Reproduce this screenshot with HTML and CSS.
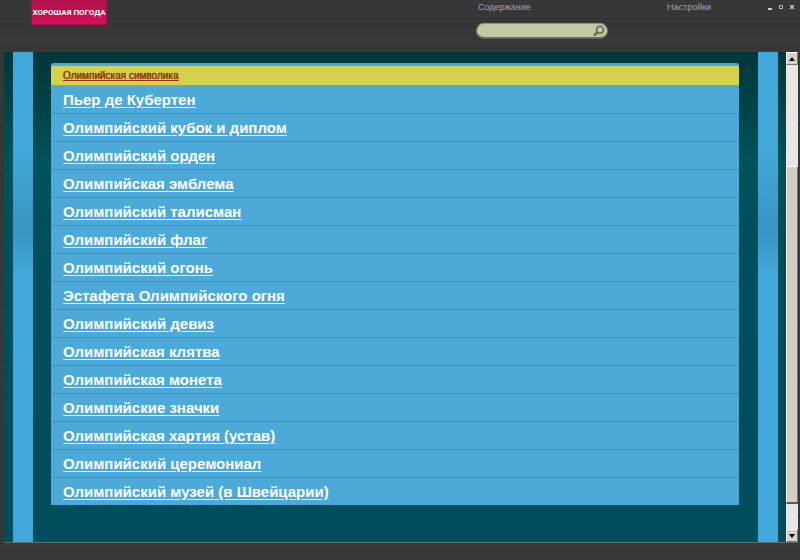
FILE: index.html
```html
<!DOCTYPE html>
<html lang="ru">
<head>
  <meta charset="UTF-8">
  <meta name="viewport" content="width=device-width, initial-scale=1.0">
  <title>Олимпийская символика</title>
  <link rel="stylesheet" href="styles.css">
</head>
<body>
  <header class="top">
    <a class="logo" href="#">ХОРОШАЯ ПОГОДА</a>
    <div class="tools">
      <a class="menu-link" href="#">Содержание</a>
      <form class="search">
        <input type="text" aria-label="Поиск">
        <button type="submit" aria-label="Найти">
          <svg width="12" height="12" viewBox="0 0 12 12" fill="none" stroke="#606253">
            <circle cx="7" cy="4.7" r="3.5" stroke-width="1.6"/>
            <path d="M4.5 7.2L1 10.6" stroke-width="2.2"/>
          </svg>
        </button>
      </form>
    </div>
    <a class="menu-link settings" href="#">Настройки</a>
    <div class="window-buttons">
      <button type="button" aria-label="Свернуть"><svg width="6" height="6" viewBox="0 0 6 6"><path d="M1 5h4" stroke="#ccc" stroke-width="2"/></svg></button>
      <button type="button" aria-label="Развернуть"><svg width="6" height="6" viewBox="0 0 6 6"><path d="M1.5 1.5h3v3h-3z" fill="none" stroke="#bbb"/></svg></button>
      <button type="button" aria-label="Закрыть"><svg width="6" height="6" viewBox="0 0 6 6"><path d="M1 1l4 4M5 1L1 5" stroke="#ccc" stroke-width="1.2"/></svg></button>
    </div>
  </header>

  <main class="stage">
    <div class="stripe"></div>
    <nav class="panel">
      <h1><a href="#">Олимпийская символика</a></h1>
      <ul>
        <li><a href="#">Пьер де Кубертен</a></li>
        <li><a href="#">Олимпийский кубок и диплом</a></li>
        <li><a href="#">Олимпийский орден</a></li>
        <li><a href="#">Олимпийская эмблема</a></li>
        <li><a href="#">Олимпийский талисман</a></li>
        <li><a href="#">Олимпийский флаг</a></li>
        <li><a href="#">Олимпийский огонь</a></li>
        <li><a href="#">Эстафета Олимпийского огня</a></li>
        <li><a href="#">Олимпийский девиз</a></li>
        <li><a href="#">Олимпийская клятва</a></li>
        <li><a href="#">Олимпийская монета</a></li>
        <li><a href="#">Олимпийские значки</a></li>
        <li><a href="#">Олимпийская хартия (устав)</a></li>
        <li><a href="#">Олимпийский церемониал</a></li>
        <li><a href="#">Олимпийский музей (в Швейцарии)</a></li>
      </ul>
    </nav>
    <div class="stripe"></div>
    <div class="scrollbar">
      <button type="button" aria-label="Вверх"><svg width="6" height="4" viewBox="0 0 6 4"><path d="M3 0l3 4H0z"/></svg></button>
      <div class="track"><div class="thumb"></div></div>
      <button type="button" aria-label="Вниз"><svg width="6" height="4" viewBox="0 0 6 4"><path d="M0 0h6L3 4z"/></svg></button>
    </div>
  </main>
</body>
</html>
```
FILE: styles.css
```css
* {
  box-sizing: border-box;
}

body {
  display: flex;
  flex-direction: column;
  min-height: 100vh;
  margin: 0;
  padding: 0 2px 17px 4px;
  font-family: "Liberation Sans", Arial, sans-serif;
  background: #383737 repeating-linear-gradient(#363535 0, #3b3a3a 2px, #383737 4px, #353434 5px, #3a3939 7px);
}

button {
  display: flex;
  align-items: center;
  justify-content: center;
  padding: 0;
  border: 0;
  background: none;
}

/* header */
.top {
  display: flex;
  align-items: flex-start;
  height: 52px;
}

.logo {
  width: 76px;
  height: 25px;
  margin-left: 27px;
  border: 1px solid #a70f46;
  border-top: 0;
  background: linear-gradient(#b01049, #d50f5a);
  color: #fff;
  font: bold 8px/25px Roboto, sans-serif;
  text-align: center;
  text-decoration: none;
  white-space: nowrap;
}

.tools {
  margin-left: auto;
}

.menu-link {
  display: block;
  padding-left: 2px;
  color: #a3a2a2;
  font-size: 9px;
  line-height: 15px;
  text-decoration: none;
}

.search {
  display: flex;
  align-items: center;
  width: 132px;
  height: 16px;
  margin-top: 8px;
  padding: 0 2px 0 8px;
  border: 1px solid #77796a;
  border-top-color: #929481;
  border-bottom: 2px solid #696b5e;
  border-radius: 8px;
  background: #c5c7a7;
}

.search input {
  flex: 1;
  min-width: 0;
  height: 12px;
  padding: 0;
  border: 0;
  outline: 0;
  background: none;
  font-size: 9px;
}

.settings {
  width: 102px;
  margin-left: 57px;
}

.window-buttons {
  display: flex;
  gap: 5px;
  padding: 4px 3px 0 0;
}

.window-buttons button {
  width: 6px;
  height: 6px;
}

/* content */
.stage {
  display: flex;
  flex: 1;
  border-bottom: 1px solid #55777c;
  background: linear-gradient(#00373b, #004347 50px, #00535a 110px, #00505c 180px, #004d5c);
}

.stripe {
  flex: none;
  width: 20px;
  margin-left: 9px;
  background: linear-gradient(#42a8d9 100px, #3897c5 170px, #3897c5 185px, #42a8d9 220px);
}

.panel {
  flex: 1;
  align-self: flex-start;
  margin: 11px 10px 37px 18px;
  border-top: 3px solid #4cacd9;
  border-radius: 3px 3px 0 0;
  background: #4da9d7;
}

.panel h1 {
  margin: 0;
  padding-left: 12px;
  border-bottom: 1px solid #8ca66b;
  background: #d6d04d;
  font-size: 10px;
  font-weight: normal;
  line-height: 19px;
}

.panel h1 a {
  color: #8a2c08;
  text-shadow: 0 0 1px #933b10;
}

.panel ul {
  margin: 0;
  padding: 0;
  list-style: none;
}

.panel li {
  height: 28px;
  padding-left: 12px;
  border-bottom: 1px solid #3f93bd;
  font-size: 15px;
  font-weight: bold;
  line-height: 28px;
}

.panel li:last-child {
  height: 27px;
  border-bottom: 0;
}

.panel li a {
  color: #fff;
  text-underline-offset: 2px;
}

/* scrollbar */
.scrollbar {
  display: flex;
  flex-direction: column;
  flex: none;
  width: 12px;
  margin-left: 8px;
  background: #e9e7e4;
}

.scrollbar button {
  height: 13px;
  border: 1px solid #fff;
  border-right-color: #77736d;
  border-bottom-color: #77736d;
  background: #d6d2cb;
}

.track {
  display: flex;
  flex: 1;
  flex-direction: column;
  justify-content: flex-end;
  padding-bottom: 25px;
}

.thumb {
  height: 77%;
  border: 1px solid #fff;
  border-right-color: #77736d;
  border-bottom: 2px solid #5d5953;
  background: #d2cec7;
}
```
